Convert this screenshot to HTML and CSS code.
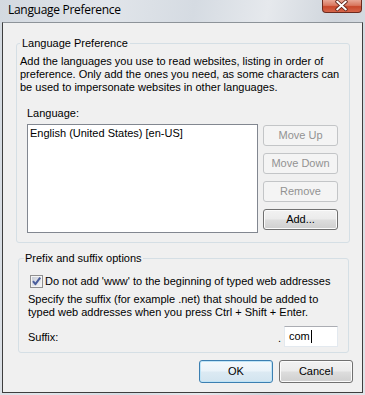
FILE: index.html
```html
<!DOCTYPE html>
<html>
<head>
<meta charset="utf-8">
<link rel="stylesheet" href="styles.css">
</head>
<body>
<div class="window">
  <div class="titlebar">
    <span class="title">Language Preference</span>
    <div class="close">
      <svg width="40" height="13" viewBox="0 0 40 13">
        <path d="M15.5 2.5 L24.5 10.5 M24.5 2.5 L15.5 10.5" stroke="#5a1e14" stroke-width="3.6" stroke-linecap="round" fill="none"/>
        <path d="M15.5 2.5 L24.5 10.5 M24.5 2.5 L15.5 10.5" stroke="#ffffff" stroke-width="2" stroke-linecap="round" fill="none"/>
      </svg>
    </div>
  </div>
  <div class="client">
    <fieldset class="group group-lang">
      <legend class="legend">Language Preference</legend>
      <p class="desc">Add the languages you use to read websites, listing in order of<br>preference. Only add the ones you need, as some characters can<br>be used to impersonate websites in other languages.</p>
      <div class="label-lang">Language:</div>
      <div class="list-row">
        <div class="listbox">
          <div class="list-item">English (United States) [en-US]</div>
        </div>
        <div class="btn-col">
          <div class="btn disabled">Move Up</div>
          <div class="btn disabled">Move Down</div>
          <div class="btn disabled">Remove</div>
          <div class="btn">Add...</div>
        </div>
      </div>
    </fieldset>
    <fieldset class="group group-suffix">
      <legend class="legend legend-suffix">Prefix and suffix options</legend>
      <div class="suffix-body">
        <div class="check-row">
          <svg class="checkbox" width="13" height="13" viewBox="0 0 13 13">
            <defs>
              <linearGradient id="cbg" x1="0" y1="0" x2="1" y2="1">
                <stop offset="0" stop-color="#c7ccd6"/>
                <stop offset="1" stop-color="#f4f5f7"/>
              </linearGradient>
            </defs>
            <rect x="0.5" y="0.5" width="12" height="12" fill="#f4f4f4" stroke="#8f8f8f"/>
            <rect x="2" y="2" width="9" height="9" fill="url(#cbg)"/>
            <path d="M3 6.2 L5.4 9.2 L10.2 2.6" stroke="#4a5e9c" stroke-width="2" fill="none" stroke-linejoin="round"/>
          </svg>
          <span class="check-label">Do not add 'www' to the beginning of typed web addresses</span>
        </div>
        <p class="desc2">Specify the suffix (for example .net) that should be added to<br>typed web addresses when you press Ctrl + Shift + Enter.</p>
        <div class="suffix-row">
          <span class="suffix-label">Suffix:</span>
          <div class="suffix-field">
            <span class="dot">.</span>
            <div class="input"><span class="input-text">com</span><span class="caret"></span></div>
          </div>
        </div>
      </div>
    </fieldset>
    <div class="dialog-buttons">
      <div class="btn btn-main btn-default">OK</div>
      <div class="btn btn-main">Cancel</div>
    </div>
  </div>
</div>
</body>
</html>
```
FILE: styles.css
```css
* { box-sizing: border-box; }
html, body { margin: 0; padding: 0; }
body {
  width: 365px;
  height: 395px;
  overflow: hidden;
  font-family: "Liberation Sans", Arial, sans-serif;
  font-size: 11px;
  color: #000;
}
.window {
  width: 365px;
  height: 395px;
  display: flex;
  flex-direction: column;
  padding: 0 2px 2px 2px;
  background: linear-gradient(100deg, #d3d9e0 0%, #e1e5ea 25%, #d5dbe2 45%, #e6e9ed 62%, #cfd5dc 78%, #e0e4e8 100%);
}
.titlebar {
  height: 22px;
  flex: none;
  display: flex;
  justify-content: space-between;
  align-items: flex-start;
}
.title {
  font-family: "Open Sans", "Noto Sans", sans-serif;
  font-size: 12px;
  letter-spacing: -0.3px;
  line-height: 16px;
  padding: 2px 0 0 6px;
  color: #000;
}
.close {
  width: 40px;
  height: 13px;
  margin-right: 1px;
  border: 1px solid #6c2a1e;
  border-top: none;
  border-radius: 0 0 4px 4px;
  background: linear-gradient(#e8a796 0%, #d9775f 45%, #c8472b 55%, #d5654a 100%);
  display: flex;
}
.close svg { display: block; margin: -1px 0 0 -1px; }
.client {
  flex: 1;
  background: #f0f0f0;
  border: 1px solid #3e3e3e;
  border-top-color: #8d9399;
  display: flex;
  flex-direction: column;
  padding-top: 14px;
}
.group {
  margin: 0;
  min-width: 0;
  border: 1px solid #d5dfe5;
  border-radius: 3px;
}
.legend {
  padding: 0 2px;
  line-height: 13px;
}
.group-lang {
  margin: 0 12px 0 13px;
  padding: 0 0 9px 3px;
}
.desc {
  margin: 5px 0 0 0;
  line-height: 13px;
  white-space: nowrap;
}
.label-lang {
  margin: 13px 0 0 7px;
  line-height: 13px;
}
.list-row {
  display: flex;
  gap: 5px;
  margin: 4px 0 0 7px;
}
.listbox {
  width: 231px;
  height: 109px;
  background: #fff;
  border: 1px solid #828790;
  padding: 2px 2px;
}
.list-item { line-height: 13px; }
.btn-col {
  display: flex;
  flex-direction: column;
  gap: 7px;
  padding-top: 1px;
}
.btn {
  width: 75px;
  height: 21px;
  border: 1px solid #707070;
  border-radius: 3px;
  background: linear-gradient(#f2f2f2 0%, #ebebeb 48%, #dddddd 52%, #cfcfcf 100%);
  box-shadow: inset 0 0 0 1px #fbfbfb;
  text-align: center;
  line-height: 19px;
}
.btn.disabled {
  border-color: #c3c5c7;
  background: #f4f4f4;
  box-shadow: none;
  color: #929292;
}
.group-suffix {
  margin: 9px 13px 0 15px;
  padding: 0 10px 5px 5px;
}
.legend-suffix { padding: 0 1px; }
.suffix-body { padding-left: 4px; }
.check-row {
  display: flex;
  align-items: center;
  gap: 2px;
  margin: 10px 0 0 2px;
  height: 13px;
}
.checkbox { display: block; flex: none; }
.check-label { line-height: 13px; white-space: nowrap; }
.desc2 {
  margin: 5px 0 0 0;
  line-height: 13px;
  white-space: nowrap;
}
.suffix-row {
  display: flex;
  justify-content: space-between;
  align-items: center;
  margin-top: 7px;
}
.suffix-field {
  display: flex;
  align-items: flex-end;
  gap: 3px;
}
.dot { line-height: 13px; margin-bottom: 2px; }
.input {
  width: 54px;
  height: 21px;
  background: #fff;
  border: 1px solid #e3e9ef;
  border-top-color: #abadb3;
  display: flex;
  align-items: center;
  padding-left: 4px;
}
.input-text { line-height: 13px; }
.caret {
  width: 1px;
  height: 13px;
  background: #000;
  margin-left: 1px;
}
.dialog-buttons {
  display: flex;
  justify-content: flex-end;
  gap: 6px;
  margin: 7px 9px 0 0;
}
.btn-main {
  width: 74px;
  height: 23px;
  line-height: 21px;
}
.btn-default {
  border-color: #3c7fb1;
  box-shadow: inset 0 0 0 1px #bfe4f7;
  background: linear-gradient(#f4f9fc 0%, #eaf3f9 48%, #dceaf3 52%, #d2e4ef 100%);
}
```
